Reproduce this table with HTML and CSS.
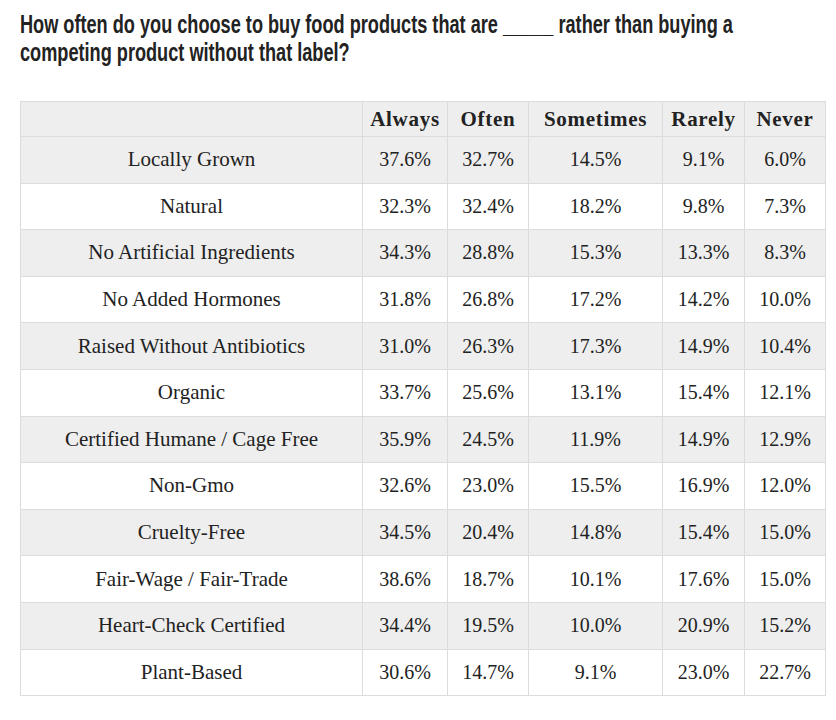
FILE: index.html
```html
<!DOCTYPE html>
<html>
<head>
<meta charset="utf-8">
<link rel="stylesheet" href="styles.css">
</head>
<body>
<div class="page">
  <h2 class="title"><span class="line">How often do you choose to buy food products that are _____ rather than buying a</span><br><span class="line">competing product without that label?</span></h2>
  <table class="data">
    <colgroup>
      <col class="c-label"><col class="c-always"><col class="c-often"><col class="c-some"><col class="c-rare"><col class="c-never">
    </colgroup>
    <thead>
      <tr><th></th><th>Always</th><th>Often</th><th>Sometimes</th><th>Rarely</th><th>Never</th></tr>
    </thead>
    <tbody>
      <tr><td>Locally Grown</td><td>37.6%</td><td>32.7%</td><td>14.5%</td><td>9.1%</td><td>6.0%</td></tr>
      <tr><td>Natural</td><td>32.3%</td><td>32.4%</td><td>18.2%</td><td>9.8%</td><td>7.3%</td></tr>
      <tr><td>No Artificial Ingredients</td><td>34.3%</td><td>28.8%</td><td>15.3%</td><td>13.3%</td><td>8.3%</td></tr>
      <tr><td>No Added Hormones</td><td>31.8%</td><td>26.8%</td><td>17.2%</td><td>14.2%</td><td>10.0%</td></tr>
      <tr><td>Raised Without Antibiotics</td><td>31.0%</td><td>26.3%</td><td>17.3%</td><td>14.9%</td><td>10.4%</td></tr>
      <tr><td>Organic</td><td>33.7%</td><td>25.6%</td><td>13.1%</td><td>15.4%</td><td>12.1%</td></tr>
      <tr><td>Certified Humane / Cage Free</td><td>35.9%</td><td>24.5%</td><td>11.9%</td><td>14.9%</td><td>12.9%</td></tr>
      <tr><td>Non-Gmo</td><td>32.6%</td><td>23.0%</td><td>15.5%</td><td>16.9%</td><td>12.0%</td></tr>
      <tr><td>Cruelty-Free</td><td>34.5%</td><td>20.4%</td><td>14.8%</td><td>15.4%</td><td>15.0%</td></tr>
      <tr><td>Fair-Wage / Fair-Trade</td><td>38.6%</td><td>18.7%</td><td>10.1%</td><td>17.6%</td><td>15.0%</td></tr>
      <tr><td>Heart-Check Certified</td><td>34.4%</td><td>19.5%</td><td>10.0%</td><td>20.9%</td><td>15.2%</td></tr>
      <tr><td>Plant-Based</td><td>30.6%</td><td>14.7%</td><td>9.1%</td><td>23.0%</td><td>22.7%</td></tr>
    </tbody>
  </table>
</div>
</body>
</html>
```
FILE: styles.css
```css
html, body {
  margin: 0;
  padding: 0;
  background: #fff;
}
.page {
  padding: 10px 11px 0 20px;
}
.title {
  margin: 0 0 35px 0;
  font-family: "Liberation Sans", Arial, sans-serif;
  font-weight: bold;
  font-size: 26px;
  line-height: 28px;
  color: #222;
  white-space: nowrap;
  transform: scaleX(0.698);
  transform-origin: left top;
}
.data {
  border-collapse: collapse;
  width: 806px;
  table-layout: fixed;
  font-family: "Liberation Serif", "Times New Roman", serif;
  font-size: 20px;
  color: #222;
}
.c-label { width: 342px; }
.c-always { width: 85px; }
.c-often { width: 81px; }
.c-some { width: 134px; }
.c-rare { width: 82px; }
.c-never { width: 81px; }
.data th, .data td {
  border: 1px solid #dcdcdc;
  text-align: center;
  padding: 0;
  white-space: nowrap;
}
.data th {
  height: 34px;
  font-size: 21px;
  letter-spacing: 0.7px;
  font-weight: bold;
  background: #eeeeee;
}
.data td {
  height: 45.6px;
}
.data td:first-child {
  font-size: 21px;
}
.data tbody tr:nth-child(odd) td {
  background: #eeeeee;
}
```
